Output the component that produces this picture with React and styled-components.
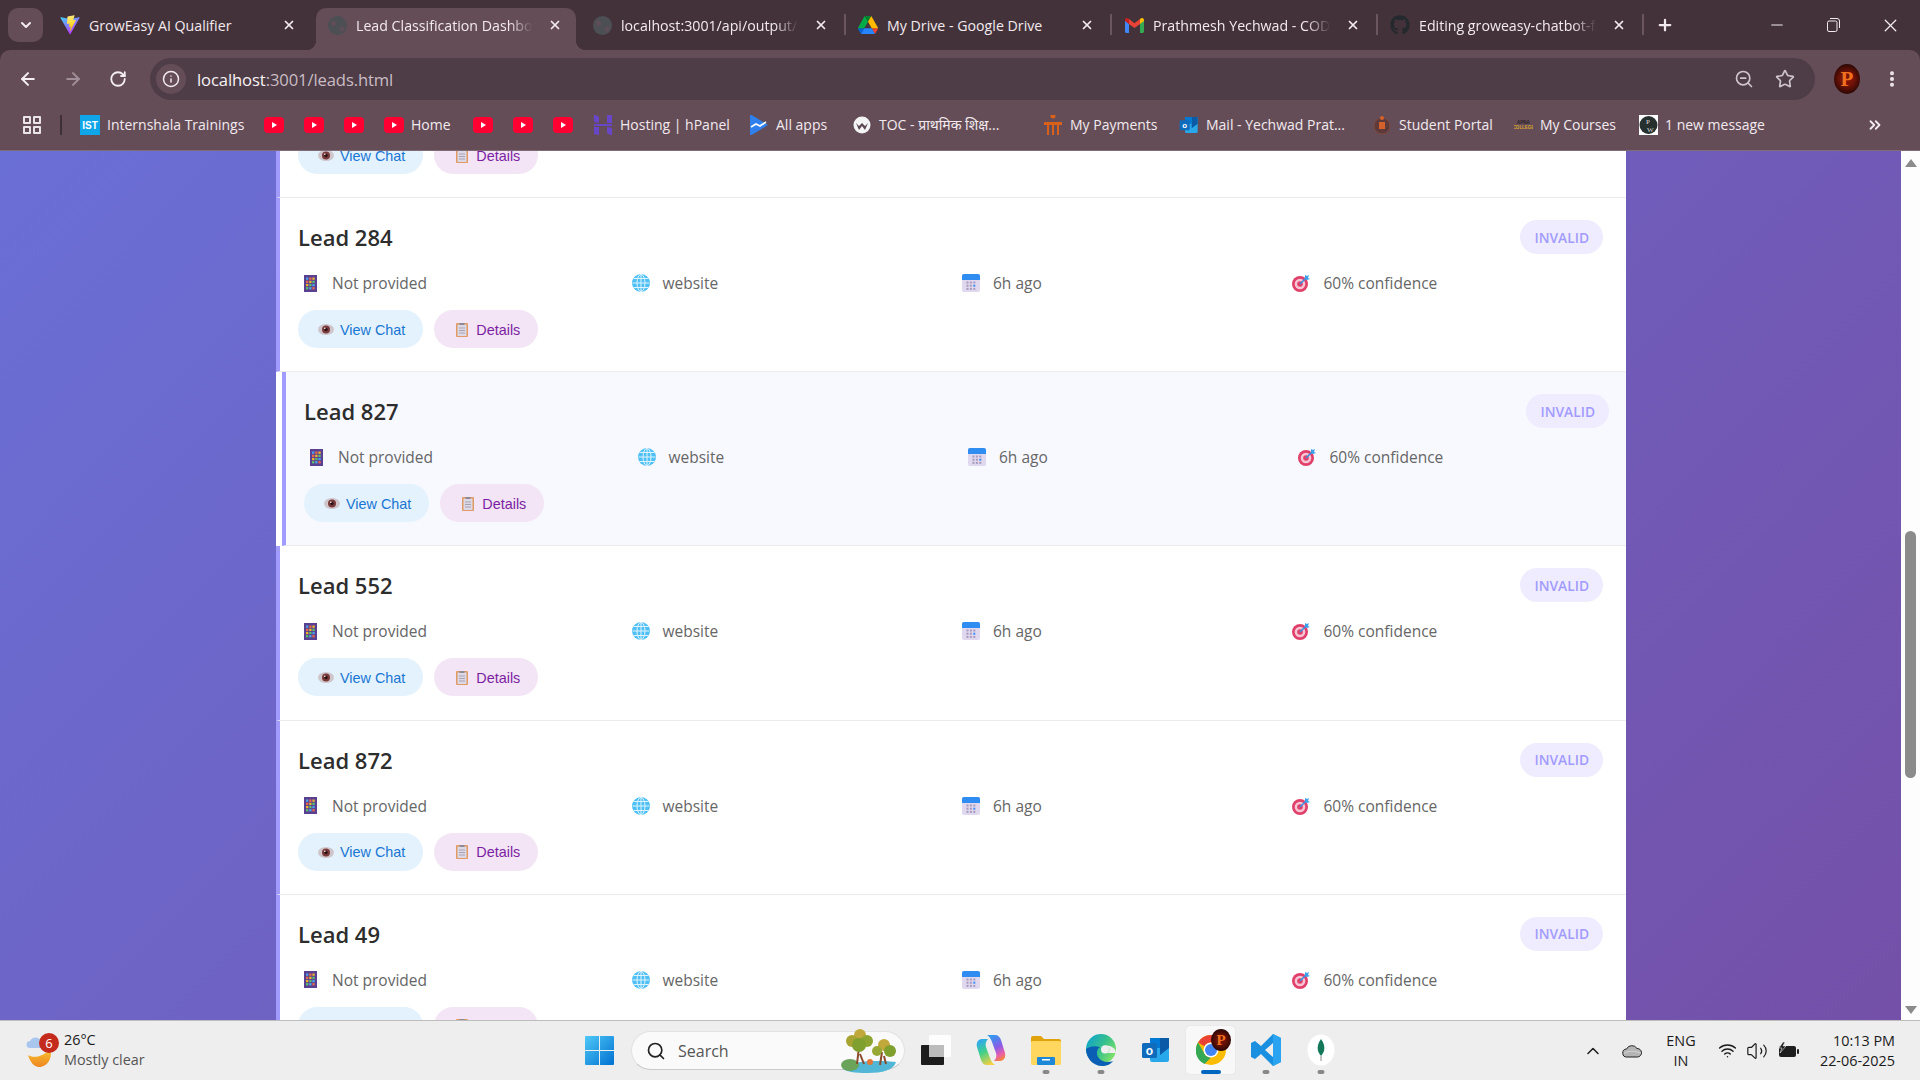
import React from "react"
import styled, { createGlobalStyle } from "styled-components"
import { FaGithub } from "react-icons/fa"
import {
  ArrowLeft, ArrowRight, RotateCw, Info, ZoomOut, Star, EllipsisVertical, X, Plus, Minus,
  ChevronDown, ChevronsRight, ChevronUp, Search, Wifi, Volume2,
} from "lucide-react"

const Global = createGlobalStyle`
  html, body { margin: 0; padding: 0; height: 100%; overflow: hidden; }
  * { box-sizing: border-box; }
  body { font-family: "Open Sans", "Noto Sans", sans-serif; }
`

const Screen = styled.div`
  width: 1920px;
  height: 1080px;
  display: flex;
  flex-direction: column;
  overflow: hidden;
`

/* ---------- browser chrome ---------- */
const Chrome = styled.div`
  background: #44323b;
  color: #f2eaee;
  flex: none;
`
const TabStrip = styled.div`
  height: 50px;
  display: flex;
  align-items: flex-end;
  padding-left: 8px;
`
const TabMenu = styled.div`
  width: 35px;
  height: 34px;
  margin: 0 7px 8px 0;
  border-radius: 10px;
  background: #654d58;
  display: flex;
  align-items: center;
  justify-content: center;
`
const Tab = styled.div`
  position: relative;
  width: 260px;
  height: 42px;
  display: flex;
  align-items: center;
  padding: 0 14px 8px ${p => (p.$active ? 11 : 10)}px;
  border-radius: 10px 10px 0 0;
  background: ${p => (p.$active ? "#654d58" : "transparent")};
  ${p => p.$active && `
    &::before, &::after {
      content: "";
      position: absolute;
      bottom: 0;
      width: 10px;
      height: 10px;
      background: radial-gradient(circle at ${"var(--c)"} , transparent 10px, #654d58 10.5px);
    }
    &::before { left: -10px; --c: 0 0; }
    &::after { right: -10px; --c: 100% 0; }
  `}
`
const Favicon = styled.span`
  width: 20px;
  height: 20px;
  flex: none;
  display: flex;
  align-items: center;
  justify-content: center;
  color: ${p => p.$color || "inherit"};
`
const TabTitle = styled.span`
  flex: 1;
  margin: 0 14px 0 9px;
  font-size: 14.2px;
  white-space: nowrap;
  overflow: hidden;
  -webkit-mask-image: ${p => (p.$fade ? "linear-gradient(to right, #000 86%, transparent 99%)" : "none")};
  mask-image: ${p => (p.$fade ? "linear-gradient(to right, #000 86%, transparent 99%)" : "none")};
`
const TabSep = styled.span`
  width: 2px;
  height: 21px;
  margin: 0 2px 15px;
  background: ${p => (p.$hidden ? "transparent" : "#6a5560")};
  align-self: flex-end;
  flex: none;
`
const NewTab = styled.span`
  width: 22px;
  margin: 0 0 16px 8px;
  display: flex;
  justify-content: center;
`
const WindowButtons = styled.div`
  margin-left: auto;
  display: flex;
  align-self: stretch;
  align-items: center;
  padding-right: 1px;
`
const WindowButton = styled.span`
  width: 57px;
  display: flex;
  justify-content: center;
`
const Toolbar = styled.div`
  height: 50px;
  background: #654d58;
  border-radius: 10px 10px 0 0;
  display: flex;
  align-items: flex-end;
  padding-left: 5px;
`
const NavButton = styled.span`
  width: 45px;
  height: 42px;
  display: flex;
  align-items: center;
  justify-content: center;
  color: ${p => (p.$dim ? "#a08f98" : "#f4eef1")};
`
const Omnibox = styled.div`
  width: 1665px;
  height: 42px;
  margin-left: 10px;
  border-radius: 21px;
  background: #4e3d47;
  display: flex;
  align-items: center;
  padding: 0 6px;
`
const InfoChip = styled.span`
  width: 30px;
  height: 30px;
  border-radius: 50%;
  background: #654d58;
  display: flex;
  align-items: center;
  justify-content: center;
  flex: none;
`
const Url = styled.span`
  margin-left: 11px;
  font-size: 16.6px;
  letter-spacing: -0.1px;
  color: #c9bcc3;
  & b { font-weight: 400; color: #f7f2f4; }
`
const OmniTools = styled.span`
  margin-left: auto;
  display: flex;
  gap: 21px;
  align-items: center;
  padding-right: 14px;
  color: #cfc4ca;
`
const Avatar = styled.span`
  width: 26px;
  height: 30px;
  margin-left: 19px;
  border-radius: 50%;
  background: radial-gradient(circle, #7a1408 30%, #1a0503 85%);
  color: #f0701e;
  font: bold 21px "Liberation Serif", serif;
  display: flex;
  align-items: center;
  justify-content: center;
  align-self: center;
  position: relative;
  top: 4px;
`
const Kebab = styled.span`
  margin-left: 22px;
  align-self: center;
  display: flex;
  position: relative;
  top: 4px;
`
const BookmarkBar = styled.div`
  height: 51px;
  background: #654d58;
  border-bottom: 1px solid #7f6c77;
  display: flex;
  align-items: center;
  padding: 0 0 1px 23px;
`
const AppsGrid = styled.span`
  width: 18px;
  height: 18px;
  display: grid;
  grid-template-columns: 8px 8px;
  gap: 2px;
  flex: none;
  & i { border: 2px solid #ebe4e7; border-radius: 1px; display: block; }
`
const BarSep = styled.span`
  width: 2px;
  height: 20px;
  background: #3f2f37;
  margin: 0 18px 0 19px;
  flex: none;
`
const Bookmark = styled.span`
  width: ${p => p.$w}px;
  flex: none;
  display: flex;
  align-items: center;
  font-size: 14px;
  white-space: nowrap;
  overflow: hidden;
  & > span + span { margin-left: 7px; }
`
const MoreBookmarks = styled.span`
  margin-left: auto;
  margin-right: 36px;
  display: flex;
`

/* ---------- page ---------- */
const Viewport = styled.div`
  flex: 1;
  min-height: 0;
  display: flex;
`
const PageArea = styled.div`
  flex: 1;
  overflow: hidden;
  background: linear-gradient(135deg, #6a6fd6 0%, #7450a8 100%);
`
const Panel = styled.div`
  width: 1350px;
  height: 100%;
  margin-left: 276px;
  background: #fff;
  overflow: hidden;
`
const LeadRow = styled.div`
  height: 174.2px;
  padding: 22px 20px 0 18px;
  border-left: 4px solid #a29bfe;
  border-bottom: 1px solid #ececec;
  background: ${p => (p.$hover ? "#f8f9ff" : "#fff")};
  transform: ${p => (p.$hover ? "translateX(6px)" : "none")};
`
/* the row the page is scrolled past: only the bottom of its buttons shows */
const ScrolledRow = styled(LeadRow)`
  display: flow-root;
  height: 47px;
  padding-top: 0;
`
const RowHead = styled.div`
  height: 34px;
  display: flex;
  align-items: center;
  justify-content: space-between;
`
const LeadName = styled.div`
  font-size: 22px;
  font-weight: 600;
  color: #2d2d2d;
`
const StatusBadge = styled.span`
  height: 34px;
  padding: 0 14px;
  border-radius: 17px;
  background: #efecff;
  color: #a29bfe;
  font-size: 13.8px;
  font-weight: 600;
  display: flex;
  align-items: center;
  margin-right: 3px;
`
const DetailGrid = styled.div`
  display: grid;
  grid-template-columns: repeat(4, 315.5px);
  column-gap: 15px;
  margin-top: 18px;
  height: 20px;
`
const DetailCell = styled.div`
  display: flex;
  align-items: center;
  font-size: 15.5px;
  color: #666;
`
const DetailIcon = styled.span`
  width: 24px;
  margin-right: 10px;
  display: flex;
  justify-content: center;
`
const Actions = styled.div`
  display: flex;
  gap: 11px;
  margin-top: ${p => (p.$scrolled ? -15 : 18)}px;
`
const PillButton = styled.button`
  height: 38px;
  padding: 1px 18px 0;
  border: none;
  border-radius: 19px;
  background: ${p => (p.$variant === "chat" ? "#e3f2fd" : "#f3e5f5")};
  color: ${p => (p.$variant === "chat" ? "#1976d2" : "#7b1fa2")};
  font: 14.4px "Liberation Sans", Arial, sans-serif;
  display: flex;
  align-items: center;
  gap: 4px;
`
const ButtonIcon = styled.span`
  width: 20px;
  display: flex;
  justify-content: center;
`
const Scrollbar = styled.div`
  width: 19px;
  flex: none;
  background: #fdfdfd;
  display: flex;
  flex-direction: column;
  align-items: center;
  padding-top: 8px;
`
const ArrowUp = styled.span`
  width: 0;
  height: 0;
  border: 6px solid transparent;
  border-top: none;
  border-bottom: 8px solid #8b8b8b;
`
const ArrowDown = styled.span`
  width: 0;
  height: 0;
  margin-top: 228px;
  border: 6px solid transparent;
  border-bottom: none;
  border-top: 8px solid #8b8b8b;
`
const Thumb = styled.span`
  width: 11px;
  height: 247px;
  margin-top: 364px;
  border-radius: 6px;
  background: #8b8b8b;
  flex: none;
`

/* ---------- taskbar ---------- */
const Taskbar = styled.div`
  height: 60px;
  flex: none;
  background: #eeeeee;
  border-top: 1px solid #bdbdbd;
  display: flex;
  align-items: center;
  color: #1b1b1b;
`
const Weather = styled.div`
  width: 585px;
  padding-left: 25px;
  display: flex;
  align-items: center;
`
const WeatherIcon = styled.span`
  position: relative;
  width: 39px;
  height: 36px;
  display: block;
  flex: none;
`
const Badge = styled.span`
  position: absolute;
  left: 14px;
  top: 0;
  width: 20px;
  height: 20px;
  border-radius: 50%;
  background: #c42b1c;
  color: #fff;
  font-size: 13px;
  display: flex;
  align-items: center;
  justify-content: center;
`
const WeatherText = styled.div`
  font-size: 14.4px;
  line-height: 20px;
  margin-top: -2px;
  & small { display: block; font-size: 14.4px; color: #555; }
`
const TaskIcons = styled.div`
  display: flex;
  align-items: center;
`
const StartButton = styled.span`
  display: flex;
  margin-right: 17px;
`
const SearchPill = styled.div`
  width: 274px;
  height: 39px;
  border-radius: 20px;
  background: #fafafa;
  border: 1px solid #e2e2e2;
  border-bottom-color: #c9c9c9;
  display: flex;
  align-items: center;
  padding: 0 6px 0 14px;
  font-size: 16px;
  color: #555;
  margin-right: 3px;
  & span { margin-left: 12px; flex: 1; }
`
const TaskItem = styled.span`
  position: relative;
  width: 55px;
  height: 48px;
  margin-top: -1px;
  display: flex;
  align-items: center;
  justify-content: center;
  &::before {
    content: "";
    position: absolute;
    left: 3px;
    right: 3px;
    top: 0;
    bottom: 0;
    border-radius: 4px;
    background: ${p => (p.$state === "active" ? "#f8f8f8" : "transparent")};
    box-shadow: ${p => (p.$state === "active" ? "0 0 1px #ccc" : "none")};
  }
  & svg { position: relative; }
  &::after {
    content: "";
    position: absolute;
    bottom: 0;
    left: 50%;
    transform: translateX(-50%);
    height: 4px;
    border-radius: 2px;
    width: ${p => (p.$state === "active" ? 20 : 7)}px;
    background: ${p => (p.$state === "active" ? "#0067c0" : p.$state === "open" ? "#888" : "transparent")};
  }
`
const ProfileBadge = styled.span`
  position: absolute;
  left: 28px;
  top: 3px;
  width: 20px;
  height: 22px;
  border-radius: 50%;
  background: radial-gradient(circle, #6d1208 30%, #180403 85%);
  color: #f0701e;
  font: bold 15px "Liberation Serif", serif;
  display: flex;
  align-items: center;
  justify-content: center;
`
const Tray = styled.div`
  margin-left: auto;
  display: flex;
  align-items: center;
  padding-right: 25px;
  font-size: 14.4px;
`
const TrayIcon = styled.span`
  width: ${p => p.$w}px;
  display: flex;
  justify-content: center;
`
const Lang = styled.div`
  width: 44px;
  text-align: center;
  line-height: 20px;
  margin-right: 9px;
`
const Clock = styled.div`
  width: 92px;
  text-align: right;
  line-height: 20px;
`

/* ---------- drawn icons ---------- */
const ViteIcon = () => (
  <svg width="20" height="20" viewBox="0 0 410 404">
    <defs>
      <linearGradient id="va" x1="0" y1="0" x2="0.6" y2="1"><stop stopColor="#41D1FF" /><stop offset="1" stopColor="#BD34FE" /></linearGradient>
      <linearGradient id="vb" x1="0.4" y1="0" x2="0.6" y2="1"><stop stopColor="#FFEA83" /><stop offset="0.5" stopColor="#FFDD35" /><stop offset="1" stopColor="#FFA800" /></linearGradient>
    </defs>
    <path fill="url(#va)" d="M399.6 59.5L215.6 388.5C211.8 395.3 202 395.4 198.2 388.6L10.6 59.6C6.4 52.2 12.7 43.3 21 44.8L205.2 77.7C206.4 77.9 207.6 77.9 208.8 77.7L389.1 44.8C397.4 43.3 403.8 52.1 399.6 59.5Z" />
    <path fill="url(#vb)" d="M293 1.6L156.8 28.3C154.6 28.7 152.9 30.6 152.8 32.9L144.4 174.3C144.2 177.7 147.3 180.2 150.5 179.5L188.4 170.7C192 169.9 195.2 173.1 194.4 176.6L183.2 231.8C182.4 235.5 185.9 238.7 189.5 237.6L212.9 230.4C216.6 229.3 220.1 232.5 219.3 236.2L201.4 322.9C200.3 328.3 207.5 331.2 210.5 326.6L212.5 323.5L323.5 102.1C325.3 98.4 322.1 94.1 318 94.9L279 102.5C275.3 103.2 272.2 99.7 273.3 96.2L298.7 7.9C299.8 4.3 296.6 0.9 293 1.6Z" />
  </svg>
)
const WebIcon = () => (
  <svg width="19" height="19" viewBox="0 0 20 20">
    <circle cx="10" cy="10" r="10" fill="#4c4f53" />
    <path d="M4 4l4 2 1 3-3 2-3-2zM12 12l4-1 2 2-3 4-3-2z" fill="#654d58" opacity=".75" />
  </svg>
)
const DriveIcon = () => (
  <svg width="20" height="18" viewBox="0 0 87.3 78">
    <path fill="#0066da" d="m6.6 66.85 3.85 6.65c.8 1.4 1.95 2.5 3.3 3.3l13.75-23.8h-27.5c0 1.55.4 3.1 1.2 4.5z" />
    <path fill="#00ac47" d="m43.65 25-13.75-23.8c-1.35.8-2.5 1.9-3.3 3.3l-25.4 44a9.06 9.06 0 0 0 -1.2 4.5h27.5z" />
    <path fill="#ea4335" d="m73.55 76.8c1.35-.8 2.5-1.9 3.3-3.3l1.6-2.75 7.65-13.25c.8-1.4 1.2-2.95 1.2-4.5h-27.502l5.852 11.5z" />
    <path fill="#00832d" d="m43.65 25 13.75-23.8c-1.35-.8-2.9-1.2-4.5-1.2h-18.5c-1.6 0-3.15.45-4.5 1.2z" />
    <path fill="#2684fc" d="m59.8 53h-32.3l-13.75 23.8c1.35.8 2.9 1.2 4.5 1.2h50.8c1.6 0 3.15-.45 4.5-1.2z" />
    <path fill="#ffba00" d="m73.4 26.5-12.7-22c-.8-1.4-1.95-2.5-3.3-3.3l-13.75 23.8 16.15 28h27.45c0-1.55-.4-3.1-1.2-4.5z" />
  </svg>
)
const GmailIcon = () => (
  <svg width="19" height="15" viewBox="0 0 19 15">
    <path fill="#4285f4" d="M0 2v11.5C0 14.3.7 15 1.5 15H4V6z" />
    <path fill="#34a853" d="M19 2v11.5c0 .8-.7 1.5-1.5 1.5H15V6z" />
    <path fill="#ea4335" d="M4 6V1l5.5 4.2L15 1v5L9.5 10z" />
    <path fill="#c5221f" d="M0 2c0-2 2.300-2.600 3.400-1.500L4 1v5L0 3z" />
    <path fill="#fbbc04" d="M19 2c0-2-2.300-2.600-3.400-1.500L15 1v5l4-3z" />
  </svg>
)
const IstIcon = () => (
  <svg width="20" height="24" viewBox="0 0 20 24">
    <rect width="20" height="24" rx="2" fill="#0ea5e9" />
    <text x="10" y="16" textAnchor="middle" fill="#fff" fontSize="10" fontWeight="700" fontFamily="Liberation Sans">IST</text>
  </svg>
)
const YoutubeIcon = () => (
  <svg width="20" height="16" viewBox="0 0 20 16">
    <rect width="20" height="16" rx="4" fill="#ff0033" />
    <path d="M8 5l5 3-5 3z" fill="#fff" />
  </svg>
)
const HostingerIcon = () => (
  <svg width="18" height="22" viewBox="0 0 18 22" fill="#6747c7">
    <path d="M0 0l5 3v6l-5-1zM13 0l5 1v8h-5zM0 10h18l0 2H0zM0 13h5v8l-5-1zM13 13l5 1v8l-5-3z" />
  </svg>
)
const AllAppsIcon = () => (
  <svg width="18" height="22" viewBox="0 0 18 22">
    <path d="M0 0l18 11L0 22z" fill="#2f80ed" />
    <path d="M1 13l5-3 4 2 6-4" stroke="#fff" strokeWidth="1.600" fill="none" />
  </svg>
)
const TocIcon = () => (
  <svg width="18" height="18" viewBox="0 0 18 18">
    <circle cx="9" cy="9" r="8.500" fill="#f4f4f4" />
    <path d="M3 7l3 7 3-4 3 4 3-7-3 3-3-3-3 3z" fill="#5a4650" />
  </svg>
)
const PaymentsIcon = () => (
  <svg width="18" height="24" viewBox="0 0 18 24" fill="#d9601a">
    <circle cx="9" cy="3" r="2.500" />
    <path d="M0 9h18v3H0zM3 12h2v11H3zM8 12h2v11H8zM13 12h2v11h-2z" />
  </svg>
)
const OutlookIcon = ({ size = 20 }) => (
  <svg width={size} height={size} viewBox="0 0 30 30">
    <path d="M9 3h19v22a2 2 0 0 1-2 2H11a2 2 0 0 1-2-2z" fill="#28a8ea" />
    <path d="M9 3h10v10H9z" fill="#0078d4" />
    <path d="M19 3h9v10l-9 7z" fill="#0a5aa8" />
    <rect x="1" y="8" width="15" height="15" rx="1.500" fill="#0f6cbd" />
    <text x="8.500" y="20" textAnchor="middle" fill="#fff" fontSize="12" fontWeight="700" fontFamily="Liberation Sans">o</text>
  </svg>
)
const PortalIcon = () => (
  <svg width="18" height="24" viewBox="0 0 18 24">
    <circle cx="9" cy="13" r="8" fill="#5f3a3a" stroke="#7a4a42" />
    <path d="M6 9h6v7H6z" fill="#d4622a" />
    <circle cx="9" cy="5" r="2" fill="#d4622a" />
  </svg>
)
const CoursesIcon = () => (
  <svg width="19" height="10" viewBox="0 0 19 10" fontFamily="Liberation Sans" fontWeight="700">
    <text x="9.500" y="4" textAnchor="middle" fontSize="4.500" fill="#2a2228">APNA</text>
    <text x="9.500" y="9" textAnchor="middle" fontSize="4.500" fill="#d9a62e">COLLEGE</text>
  </svg>
)
const PwIcon = () => (
  <svg width="19" height="24" viewBox="0 0 19 24">
    <rect width="19" height="24" fill="#fff" />
    <circle cx="9.500" cy="12" r="9" fill="#26302f" />
    <text x="7" y="11" fill="#ddd" fontSize="7" fontFamily="Liberation Serif">P</text>
    <text x="8" y="19" fill="#ddd" fontSize="7" fontFamily="Liberation Serif">W</text>
  </svg>
)

const BuildingIcon = () => (
  <svg width="13" height="17" viewBox="0 0 13 17">
    <rect width="13" height="17" fill="#5a4090" />
    {[0, 1, 2, 3].map(r => [0, 1, 2].map(c => (
      <rect key={`${r}${c}`} x={2 + c * 3.2} y={2.500 + r * 3.200} width="2.300" height="2.300"
        fill={["#4aa3e8", "#e8694a", "#f0b429", "#5ac06a"][(r + c) % 4]} />
    )))}
  </svg>
)
const GlobeIcon = () => (
  <svg width="18" height="18" viewBox="0 0 18 18" fill="none">
    <circle cx="9" cy="9" r="9" fill="#4fc0f5" />
    <g stroke="#dff4ff" strokeWidth="1">
      <ellipse cx="9" cy="9" rx="4" ry="8.500" />
      <path d="M9 0v18M0.500 9h17M1.800 4.500h14.400M1.800 13.500h14.400" />
    </g>
  </svg>
)
const CalendarIcon = () => (
  <svg width="18" height="18" viewBox="0 0 18 18">
    <rect width="18" height="18" rx="2" fill="#e0d8ee" />
    <path d="M0 6V2a2 2 0 0 1 2-2h14a2 2 0 0 1 2 2v4z" fill="#2f8cf0" />
    {[0, 1, 2].map(r => [0, 1, 2].map(c => (
      <rect key={`${r}${c}`} x={4.500 + c * 3.400} y={7.500 + r * 3.200} width="2" height="2"
        fill={r === 1 && c === 2 ? "#3d8ef0" : "#a69bbd"} />
    )))}
  </svg>
)
const TargetIcon = () => (
  <svg width="19" height="18" viewBox="0 0 19 18">
    <circle cx="8" cy="10" r="8" fill="#e0406a" />
    <circle cx="8" cy="10" r="5.300" fill="#f7c6d4" />
    <circle cx="8" cy="10" r="2.800" fill="#e0406a" />
    <path d="M8 10l7-7" stroke="#3a8fe0" strokeWidth="1.600" />
    <path d="M13 1l2 1 2-1-1 3 2 1-3 1-2-1z" fill="#3aa0ea" />
  </svg>
)
const EyeIcon = () => (
  <svg width="16" height="13" viewBox="0 0 16 13">
    <ellipse cx="8" cy="6.500" rx="8" ry="5.500" fill="#cfc6cc" />
    <circle cx="8" cy="6.500" r="4" fill="#7a3a3a" />
    <circle cx="8" cy="6.500" r="1.700" fill="#2a1212" />
    <circle cx="6.800" cy="5.200" r=".8" fill="#fff" />
  </svg>
)
const ClipboardIcon = () => (
  <svg width="12" height="14" viewBox="0 0 12 14">
    <rect width="12" height="14" rx="1" fill="#e09a63" />
    <rect x="1.500" y="1.500" width="9" height="11.500" fill="#dcd8e6" />
    <rect x="3.500" width="5" height="2" fill="#8d8a94" />
    <path d="M3 5h6M3 7.500h6M3 10h6" stroke="#a8a4b4" />
  </svg>
)

const WindowsLogo = () => (
  <svg width="29" height="29" viewBox="0 0 29 29">
    <defs>
      <linearGradient id="win" x1="0" y1="0" x2="1" y2="1"><stop stopColor="#4fc9f7" /><stop offset="1" stopColor="#0070d1" /></linearGradient>
    </defs>
    <path fill="url(#win)" d="M1 0h13v14H0V1a1 1 0 0 1 1-1zM15 0h13a1 1 0 0 1 1 1v13H15zM0 15h14v14H1a1 1 0 0 1-1-1zM15 15h14v13a1 1 0 0 1-1 1H15z" />
  </svg>
)
const TaskViewIcon = () => (
  <svg width="30" height="30" viewBox="0 0 30 30">
    <rect x="0" y="10" width="23" height="20" rx="1" fill="#1c1c1c" />
    <rect x="8" y="0" width="22" height="22" rx="1" fill="#fff" opacity=".85" />
    <rect x="8" y="10" width="15" height="12" fill="#bcbcbc" />
  </svg>
)
const CopilotIcon = () => (
  <svg width="30" height="30" viewBox="0 0 30 30">
    <defs>
      <linearGradient id="cpa" x1="0.300" y1="0" x2="0.700" y2="1"><stop stopColor="#2f9bf0" /><stop offset=".5" stopColor="#8a5ce8" /><stop offset=".8" stopColor="#ea5fa8" /><stop offset="1" stopColor="#f4843b" /></linearGradient>
      <linearGradient id="cpb" x1="0.300" y1="0" x2="0.700" y2="1"><stop stopColor="#2fa8f0" /><stop offset=".45" stopColor="#3fd08a" /><stop offset="1" stopColor="#f8d040" /></linearGradient>
    </defs>
    <path fill="url(#cpa)" d="M11 0h8c3 0 5 2 6 5l4 13c1 4-1 8-5 8h-6c2-2 3-5 2-8L16 7c-1-3-3-6-5-7z" />
    <path fill="url(#cpb)" d="M19 30h-8c-3 0-5-2-6-5L1 12c-1-4 1-8 5-8h6c-2 2-3 5-2 8l4 11c1 3 3 6 5 7z" />
  </svg>
)
const ExplorerIcon = () => (
  <svg width="30" height="30" viewBox="0 0 30 30">
    <path d="M0 3a2 2 0 0 1 2-2h8l3 3h15a2 2 0 0 1 2 2v4H0z" fill="#e0a30c" />
    <rect y="6" width="30" height="24" rx="1.500" fill="#ffd75e" />
    <rect x="6" y="22" width="18" height="8" rx="1" fill="#1e88d6" />
    <rect x="11" y="24" width="8" height="1.500" fill="#fff" />
  </svg>
)
const EdgeIcon = () => (
  <svg width="30" height="32" viewBox="0 0 30 32">
    <defs>
      <linearGradient id="edg" x1="0" y1="0" x2="1" y2="0.600"><stop stopColor="#0c9fd8" /><stop offset=".6" stopColor="#37c18a" /><stop offset="1" stopColor="#7ee06a" /></linearGradient>
    </defs>
    <circle cx="15" cy="15" r="15" fill="url(#edg)" />
    <path d="M0 15c0 9 7 17 16 17 5 0 9-2 11-5-5 2-12 1-15-4-2-4-1-8 2-10-6-2-12 0-14 2z" fill="#0a5fb4" />
    <path d="M14 13c3-2 7-1 9 1 1 2 0 4-2 5h9c0-3-2-5-4-6-3-2-9-2-12 0z" fill="#eeeeee" />
    <circle cx="19" cy="15.500" r="4" fill="#eeeeee" />
  </svg>
)
const ChromeIcon = () => (
  <svg width="30" height="30" viewBox="0 0 30 30">
    <circle cx="15" cy="15" r="15" fill="#fbbc04" />
    <path d="M15 0a15 15 0 0 1 13 7.500H15a7.500 7.500 0 0 0-6.500 3.750L2 7.500A15 15 0 0 1 15 0z" fill="#ea4335" />
    <path d="M2 7.500l6.500 11.250A7.500 7.500 0 0 0 15 22.500L8.500 29A15 15 0 0 1 2 7.500z" fill="#34a853" />
    <circle cx="15" cy="15" r="7.500" fill="#fff" />
    <circle cx="15" cy="15" r="6" fill="#4285f4" />
  </svg>
)
const VsCodeIcon = () => (
  <svg width="30" height="32" viewBox="0 0 30 32">
    <path d="M22 0l8 4v24l-8 4-12-12-6 5-4-2V9l4-2 6 5zM22 9l-8 7 8 7z" fill="#1b8fe0" />
    <path d="M22 0l8 4v24l-8 4z" fill="#2aa4f0" />
  </svg>
)
const MongoIcon = () => (
  <svg width="28" height="32" viewBox="0 0 28 32">
    <ellipse cx="14" cy="16" rx="13.500" ry="15.500" fill="#fff" />
    <path d="M14 5c3 4 4 8 3 12-1 2-2 4-3 5-1-1-2-3-3-5-1-4 0-8 3-12z" fill="#13785a" />
    <path d="M14 22v5" stroke="#888" />
  </svg>
)
const SceneryIcon = () => (
  <svg width="58" height="46" viewBox="0 0 58 46">
    <path d="M2 40c10-8 40-8 54-6-2 8-14 11-28 11S6 44 2 40z" fill="#52b7d6" />
    <ellipse cx="10" cy="37" rx="9" ry="6" fill="#6ba35a" />
    <path d="M17 36l2-17M40 37l2-13M24 36l-4-10M46 36l-2-8" stroke="#8a4b2a" strokeWidth="2" />
    <circle cx="20" cy="7" r="6" fill="#c0a93a" />
    <circle cx="12" cy="13" r="6" fill="#a8a432" />
    <circle cx="27" cy="13" r="6" fill="#8da430" />
    <circle cx="19" cy="17" r="7" fill="#7f9f2e" />
    <circle cx="44" cy="17" r="6" fill="#c0a93a" />
    <circle cx="37" cy="23" r="5" fill="#97a834" />
    <circle cx="50" cy="23" r="6" fill="#7f9f2e" />
    <circle cx="30" cy="34" r="3" fill="#e0783a" />
  </svg>
)
const CloudIcon = () => (
  <svg width="20" height="14" viewBox="0 0 20 14">
    <path d="M5 13a4 4 0 0 1-.5-8A6 6 0 0 1 15 4.500 4 4 0 0 1 15.500 13z" fill="#b4b4b4" stroke="#222" strokeWidth="1" />
    <path d="M2 9.500c4-3 12-3 17 0" fill="none" stroke="#e8e8e8" strokeWidth=".6" />
  </svg>
)
const BatteryIcon = () => (
  <svg width="22" height="18" viewBox="0 0 22 18">
    <rect x="2" y="4" width="17" height="11" rx="2" fill="#1e1e1e" />
    <rect x="20" y="7" width="2" height="5" rx="1" fill="#1e1e1e" />
    <path d="M6 0L2 6h3l-2 5 6-7H6l2-4z" fill="#1e1e1e" stroke="#eee" strokeWidth=".6" />
  </svg>
)
const WeatherArt = () => (
  <svg width="30" height="36" viewBox="0 0 30 36">
    <defs>
      <linearGradient id="moon" x1="0" y1="0" x2="0" y2="1"><stop stopColor="#f8c430" /><stop offset="1" stopColor="#ee8620" /></linearGradient>
    </defs>
    <path d="M3 22c4 3 14 3 22-6 3 8-2 18-11 18-5 0-9-5-11-12z" fill="url(#moon)" />
    <path d="M5 15a3.500 3.500 0 0 1 0-7 6 6 0 0 1 11 0 3.500 3.500 0 0 1 0 7z" fill="#a9c6ee" />
  </svg>
)

const tabs = [
  { icon: <ViteIcon />, title: "GrowEasy AI Qualifier", sep: false },
  { icon: <WebIcon />, title: "Lead Classification Dashboard", fade: true, active: true, sep: false },
  { icon: <WebIcon />, title: "localhost:3001/api/output/leads", fade: true, sep: true },
  { icon: <DriveIcon />, title: "My Drive - Google Drive", sep: true },
  { icon: <GmailIcon />, title: "Prathmesh Yechwad - CODING", fade: true, sep: true },
  { icon: <FaGithub size={20} color="#24292e" />, title: "Editing groweasy-chatbot-frontend", fade: true, sep: true },
]

const bookmarks = [
  { icon: <IstIcon />, text: "Internshala Trainings", w: 184 },
  { icon: <YoutubeIcon />, w: 40 },
  { icon: <YoutubeIcon />, w: 40 },
  { icon: <YoutubeIcon />, w: 40 },
  { icon: <YoutubeIcon />, text: "Home", w: 89 },
  { icon: <YoutubeIcon />, w: 40 },
  { icon: <YoutubeIcon />, w: 40 },
  { icon: <YoutubeIcon />, w: 40 },
  { icon: <HostingerIcon />, text: "Hosting | hPanel", w: 156 },
  { icon: <AllAppsIcon />, text: "All apps", w: 103 },
  { icon: <TocIcon />, text: "TOC - प्राथमिक शिक्ष...", w: 191 },
  { icon: <PaymentsIcon />, text: "My Payments", w: 136 },
  { icon: <OutlookIcon />, text: "Mail - Yechwad Prat...", w: 193 },
  { icon: <PortalIcon />, text: "Student Portal", w: 141 },
  { icon: <CoursesIcon />, text: "My Courses", w: 125 },
  { icon: <PwIcon />, text: "1 new message", w: 135 },
]

const leads = [
  { id: 284 },
  { id: 827, hover: true },
  { id: 552 },
  { id: 872 },
  { id: 49 },
]

const LeadActions = ({ scrolled }) => (
  <Actions $scrolled={scrolled}>
    <PillButton $variant="chat"><ButtonIcon><EyeIcon /></ButtonIcon>View Chat</PillButton>
    <PillButton $variant="details"><ButtonIcon><ClipboardIcon /></ButtonIcon>Details</PillButton>
  </Actions>
)

const LeadItem = ({ lead }) => (
  <LeadRow $hover={lead.hover}>
    <RowHead>
      <LeadName>Lead {lead.id}</LeadName>
      <StatusBadge>INVALID</StatusBadge>
    </RowHead>
    <DetailGrid>
      <DetailCell><DetailIcon><BuildingIcon /></DetailIcon>Not provided</DetailCell>
      <DetailCell><DetailIcon><GlobeIcon /></DetailIcon>website</DetailCell>
      <DetailCell><DetailIcon><CalendarIcon /></DetailIcon>6h ago</DetailCell>
      <DetailCell><DetailIcon><TargetIcon /></DetailIcon>60% confidence</DetailCell>
    </DetailGrid>
    <LeadActions />
  </LeadRow>
)

const App = () => (
  <Screen>
    <Global />
    <Chrome>
      <TabStrip>
        <TabMenu><ChevronDown size={16} strokeWidth={3} /></TabMenu>
        {tabs.map(t => (
          <React.Fragment key={t.title}>
            <Tab $active={t.active}>
              <Favicon>{t.icon}</Favicon>
              <TabTitle $fade={t.fade}>{t.title}</TabTitle>
              <X size={14} strokeWidth={3} />
            </Tab>
            <TabSep $hidden={!t.sep} />
          </React.Fragment>
        ))}
        <NewTab><Plus size={18} strokeWidth={3} /></NewTab>
        <WindowButtons>
          <WindowButton><Minus size={18} strokeWidth={1.5} /></WindowButton>
          <WindowButton>
            <svg width="13" height="14" viewBox="0 0 13 14" fill="none" stroke="#f2eaee">
              <rect x="0.500" y="3" width="9.500" height="10.500" rx="1.500" />
              <path d="M3 .5h7a2.500 2.500 0 0 1 2.500 2.500v7" />
            </svg>
          </WindowButton>
          <WindowButton><X size={21} strokeWidth={1.5} /></WindowButton>
        </WindowButtons>
      </TabStrip>
      <Toolbar>
        <NavButton><ArrowLeft size={20} strokeWidth={2.4} /></NavButton>
        <NavButton $dim><ArrowRight size={20} strokeWidth={2.4} /></NavButton>
        <NavButton><RotateCw size={18} strokeWidth={2.4} /></NavButton>
        <Omnibox>
          <InfoChip><Info size={18} strokeWidth={2} /></InfoChip>
          <Url><b>localhost</b>:3001/leads.html</Url>
          <OmniTools>
            <ZoomOut size={20} strokeWidth={2} />
            <Star size={20} strokeWidth={2} />
          </OmniTools>
        </Omnibox>
        <Avatar>P</Avatar>
        <Kebab><EllipsisVertical size={20} strokeWidth={2.8} /></Kebab>
      </Toolbar>
      <BookmarkBar>
        <AppsGrid><i /><i /><i /><i /></AppsGrid>
        <BarSep />
        {bookmarks.map((b, i) => (
          <Bookmark key={i} $w={b.w}>
            <Favicon>{b.icon}</Favicon>
            {b.text && <span>{b.text}</span>}
          </Bookmark>
        ))}
        <MoreBookmarks><ChevronsRight size={18} strokeWidth={2.4} /></MoreBookmarks>
      </BookmarkBar>
    </Chrome>

    <Viewport>
      <PageArea>
        <Panel>
          <ScrolledRow><LeadActions scrolled /></ScrolledRow>
          {leads.map(l => <LeadItem key={l.id} lead={l} />)}
        </Panel>
      </PageArea>
      <Scrollbar>
        <ArrowUp />
        <Thumb />
        <ArrowDown />
      </Scrollbar>
    </Viewport>

    <Taskbar>
      <Weather>
        <WeatherIcon><WeatherArt /><Badge>6</Badge></WeatherIcon>
        <WeatherText>26°C<small>Mostly clear</small></WeatherText>
      </Weather>
      <TaskIcons>
        <StartButton><WindowsLogo /></StartButton>
        <SearchPill>
          <Search size={20} strokeWidth={2} color="#222" />
          <span>Search</span>
          <SceneryIcon />
        </SearchPill>
        <TaskItem><TaskViewIcon /></TaskItem>
        <TaskItem><CopilotIcon /></TaskItem>
        <TaskItem $state="open"><ExplorerIcon /></TaskItem>
        <TaskItem $state="open"><EdgeIcon /></TaskItem>
        <TaskItem><OutlookIcon size={30} /></TaskItem>
        <TaskItem $state="active"><ChromeIcon /><ProfileBadge>P</ProfileBadge></TaskItem>
        <TaskItem $state="open"><VsCodeIcon /></TaskItem>
        <TaskItem $state="open"><MongoIcon /></TaskItem>
      </TaskIcons>
      <Tray>
        <TrayIcon $w={24}><ChevronUp size={20} strokeWidth={1.8} /></TrayIcon>
        <TrayIcon $w={54}><CloudIcon /></TrayIcon>
        <Lang>ENG<br />IN</Lang>
        <TrayIcon $w={30}><Wifi size={19} strokeWidth={1.8} /></TrayIcon>
        <TrayIcon $w={30}><Volume2 size={22} strokeWidth={1.3} /></TrayIcon>
        <TrayIcon $w={31}><BatteryIcon /></TrayIcon>
        <Clock>10:13 PM<br />22-06-2025</Clock>
      </Tray>
    </Taskbar>
  </Screen>
)

export default App
